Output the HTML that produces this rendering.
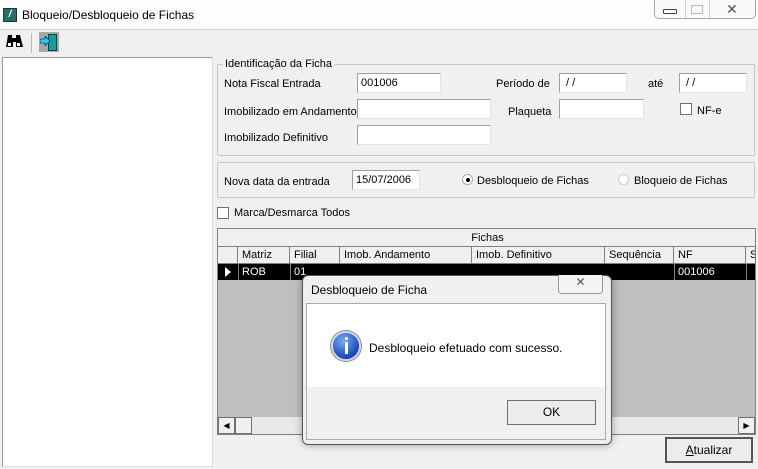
<!DOCTYPE html>
<html><head><meta charset="utf-8"><style>
*{box-sizing:border-box;margin:0;padding:0}
body{width:758px;height:469px;overflow:hidden;background:#f0f0f0;font-family:"Liberation Sans",sans-serif;font-size:11px;color:#000;position:relative}
.a{position:absolute}
.inp{position:absolute;background:#fff;border:1px solid #a0a0a0;border-right-color:#e3e3e3;border-bottom-color:#e3e3e3;height:20px;padding:3px 3px;font-size:11px}
.grp{position:absolute;border:1px solid #c8c8c8;border-radius:2px}
.lbl{position:absolute;white-space:nowrap}
.f .lbl{margin-top:1px}
.cb{position:absolute;width:12px;height:12px;border:1px solid #707070;background:#fff}
.g{font-size:11px;white-space:nowrap}
.col{position:absolute;top:0;height:17px;border-right:1px solid #808080;padding:2px 4px}
.btn{position:absolute;border:1px solid #707070;background:#ececec;text-align:center}
</style></head><body>
<div class="a" style="left:0;top:0;width:758px;height:29px;background:#fdfdfd"></div>
<div class="a" style="left:3px;top:8px;width:14px;height:14px;background:#2a6c6c;border:1px solid #0d3a3a;color:#fff;font-size:10px;font-weight:bold;text-align:center;line-height:12px;font-style:italic">/</div>
<div class="lbl" style="left:22px;top:8px;font-size:12px">Bloqueio/Desbloqueio de Fichas</div>
<div class="a" style="left:654px;top:0;width:102px;height:19px;border:1px solid #a8a8a8;border-top:none;border-radius:0 0 5px 5px;background:#fafafa"></div>
<div class="a" style="left:685px;top:0;width:1px;height:18px;background:#ccc"></div>
<div class="a" style="left:709px;top:0;width:1px;height:18px;background:#ccc"></div>
<div class="a" style="left:663px;top:9px;width:14px;height:5px;border:1px solid #444;border-radius:1px"></div>
<div class="a" style="left:691px;top:5px;width:12px;height:9px;border:1px solid #bbb"></div>
<div class="lbl" style="left:726px;top:1px;font-size:14px;color:#555">✕</div>
<div class="a" style="left:0;top:29px;width:758px;height:1px;background:#d0d0d0"></div>
<svg class="a" style="left:5px;top:34px" width="18" height="14" viewBox="0 0 18 14"><path d="M3 1h4v3h4V1h4l3 12h-7V8H8v5H1z" fill="#000"/><path d="M3 9h3v3H3zM12 9h3v3h-3z" fill="#fff"/></svg>
<div class="a" style="left:31px;top:33px;width:1px;height:20px;background:#bbb"></div>
<div class="a" style="left:39px;top:32px;width:20px;height:20px;background:#a8a8a8"></div>
<div class="a" style="left:48px;top:34px;width:9px;height:17px;background:#1a9a9a;border:1px solid #004848"></div>
<svg class="a" style="left:40px;top:36px" width="10" height="10" viewBox="0 0 10 10"><path d="M0 3h5V0l5 5-5 5V7H0z" fill="#20d0e8" stroke="#006" stroke-width=".6"/></svg>
<div class="a" style="left:2px;top:57px;width:211px;height:410px;border:1px solid #999;border-right-color:#ddd;border-bottom-color:#ddd;background:#fff"></div>
<div class="f">
<div class="grp" style="left:217px;top:64px;width:538px;height:92px"></div>
<div class="lbl" style="left:223px;top:57px;background:#f0f0f0;padding:0 2px">Identificação da Ficha</div>
<div class="lbl" style="left:224px;top:77px">Nota Fiscal Entrada</div>
<div class="inp" style="left:357px;top:73px;width:84px">001006</div>
<div class="lbl" style="left:496px;top:77px">Período de</div>
<div class="inp" style="left:559px;top:73px;width:68px">&nbsp;/ /</div>
<div class="lbl" style="left:648px;top:77px">até</div>
<div class="inp" style="left:679px;top:73px;width:68px">&nbsp;/ /</div>
<div class="lbl" style="left:224px;top:105px">Imobilizado em Andamento</div>
<div class="inp" style="left:357px;top:99px;width:134px"></div>
<div class="lbl" style="left:508px;top:105px">Plaqueta</div>
<div class="inp" style="left:559px;top:99px;width:85px"></div>
<div class="cb" style="left:680px;top:103px"></div>
<div class="lbl" style="left:697px;top:104px">NF-e</div>
<div class="lbl" style="left:224px;top:131px">Imobilizado Definitivo</div>
<div class="inp" style="left:357px;top:125px;width:134px"></div>
<div class="grp" style="left:217px;top:162px;width:538px;height:36px"></div>
<div class="lbl" style="left:224px;top:175px">Nova data da entrada</div>
<div class="inp" style="left:352px;top:170px;width:68px">15/07/2006</div>
<div class="a" style="left:462px;top:174px;width:11px;height:11px;border-radius:50%;border:1px solid #aaa;background:#fff"></div>
<div class="a" style="left:466px;top:178px;width:4px;height:4px;border-radius:50%;background:#000"></div>
<div class="lbl" style="left:477px;top:174px">Desbloqueio de Fichas</div>
<div class="a" style="left:618px;top:174px;width:11px;height:11px;border-radius:50%;border:1px solid #ccc;background:#fff"></div>
<div class="lbl" style="left:634px;top:174px">Bloqueio de Fichas</div>
<div class="cb" style="left:217px;top:207px"></div>
<div class="lbl" style="left:234px;top:206px">Marca/Desmarca Todos</div>
</div>
<div class="a" style="left:217px;top:228px;width:539px;height:207px;border:1px solid #808080;background:#bfbfbf;overflow:hidden">
 <div class="a g" style="left:0;top:0;width:539px;height:18px;background:#f0f0f0;border-bottom:1px solid #808080;text-align:center;padding-top:3px">Fichas</div>
 <div class="a g" style="left:0;top:18px;width:539px;height:17px;background:#f0f0f0;border-bottom:1px solid #808080">
  <div class="col" style="left:0;width:20px"></div>
  <div class="col" style="left:20px;width:52px">Matriz</div>
  <div class="col" style="left:72px;width:50px">Filial</div>
  <div class="col" style="left:122px;width:132px">Imob. Andamento</div>
  <div class="col" style="left:254px;width:133px">Imob. Definitivo</div>
  <div class="col" style="left:387px;width:69px">Sequência</div>
  <div class="col" style="left:456px;width:72px">NF</div>
  <div class="col" style="left:528px;width:40px">S</div>
 </div>
 <div class="a g" style="left:0;top:35px;width:539px;height:16px;background:#000;color:#fff">
  <div class="a" style="left:7px;top:3px;width:0;height:0;border-left:6px solid #fff;border-top:5px solid transparent;border-bottom:5px solid transparent"></div>
  <div class="a" style="left:20px;top:0;width:1px;height:16px;background:#808080"></div>
  <div class="a" style="left:24px;top:2px">ROB</div>
  <div class="a" style="left:72px;top:0;width:1px;height:16px;background:#808080"></div>
  <div class="a" style="left:76px;top:2px">01</div>
  <div class="a" style="left:456px;top:0;width:1px;height:16px;background:#808080"></div>
  <div class="a" style="left:460px;top:2px">001006</div>
  <div class="a" style="left:528px;top:0;width:1px;height:16px;background:#808080"></div>
 </div>
 <div class="a" style="left:0;top:188px;width:539px;height:17px;background:#e8e8e8"></div>
 <div class="btn" style="left:0;top:188px;width:17px;height:17px;font-size:8px;line-height:15px;background:#f0f0f0">◀</div>
 <div class="btn" style="left:17px;top:188px;width:17px;height:17px;background:#f0f0f0"></div>
 <div class="btn" style="left:520px;top:188px;width:17px;height:17px;font-size:8px;line-height:15px;background:#f0f0f0">▶</div>
</div>
<div class="btn" style="left:665px;top:437px;width:88px;height:26px;border:2px solid #555;background:#ececec;line-height:22px;font-size:12px"><u>A</u>tualizar</div>
<div class="a" style="left:302px;top:275px;width:310px;height:170px;border:1px solid #555;border-radius:6px;background:#f0f0f0;box-shadow:0 0 8px rgba(0,0,0,.35)"></div>
<div class="lbl" style="left:311px;top:283px;font-size:12px">Desbloqueio de Ficha</div>
<div class="a" style="left:558px;top:275px;width:45px;height:19px;border:1px solid #999;border-top:none;border-radius:0 0 4px 4px;background:#f4f4f4;text-align:center;font-size:12px;color:#555">✕</div>
<div class="a" style="left:306px;top:303px;width:300px;height:137px;border:1px solid #aaa;background:#f0f0f0"></div>
<div class="a" style="left:307px;top:304px;width:298px;height:83px;background:#fff"></div>
<div class="a" style="left:331px;top:331px;width:30px;height:30px;border-radius:50%;background:radial-gradient(circle at 40% 30%,#7aa8f0,#1a48b8 70%);border:2px solid #cdd6e6;box-shadow:0 0 0 1px #888"></div>
<div class="a" style="left:345px;top:337px;width:3px;height:3px;background:#fff;border-radius:50%"></div>
<div class="a" style="left:345px;top:342px;width:3px;height:12px;background:#fff"></div>
<div class="lbl" style="left:369px;top:341px;font-size:12px">Desbloqueio efetuado com sucesso.</div>
<div class="btn" style="left:507px;top:400px;width:89px;height:25px;line-height:23px;font-size:12px">OK</div>
</body></html>
